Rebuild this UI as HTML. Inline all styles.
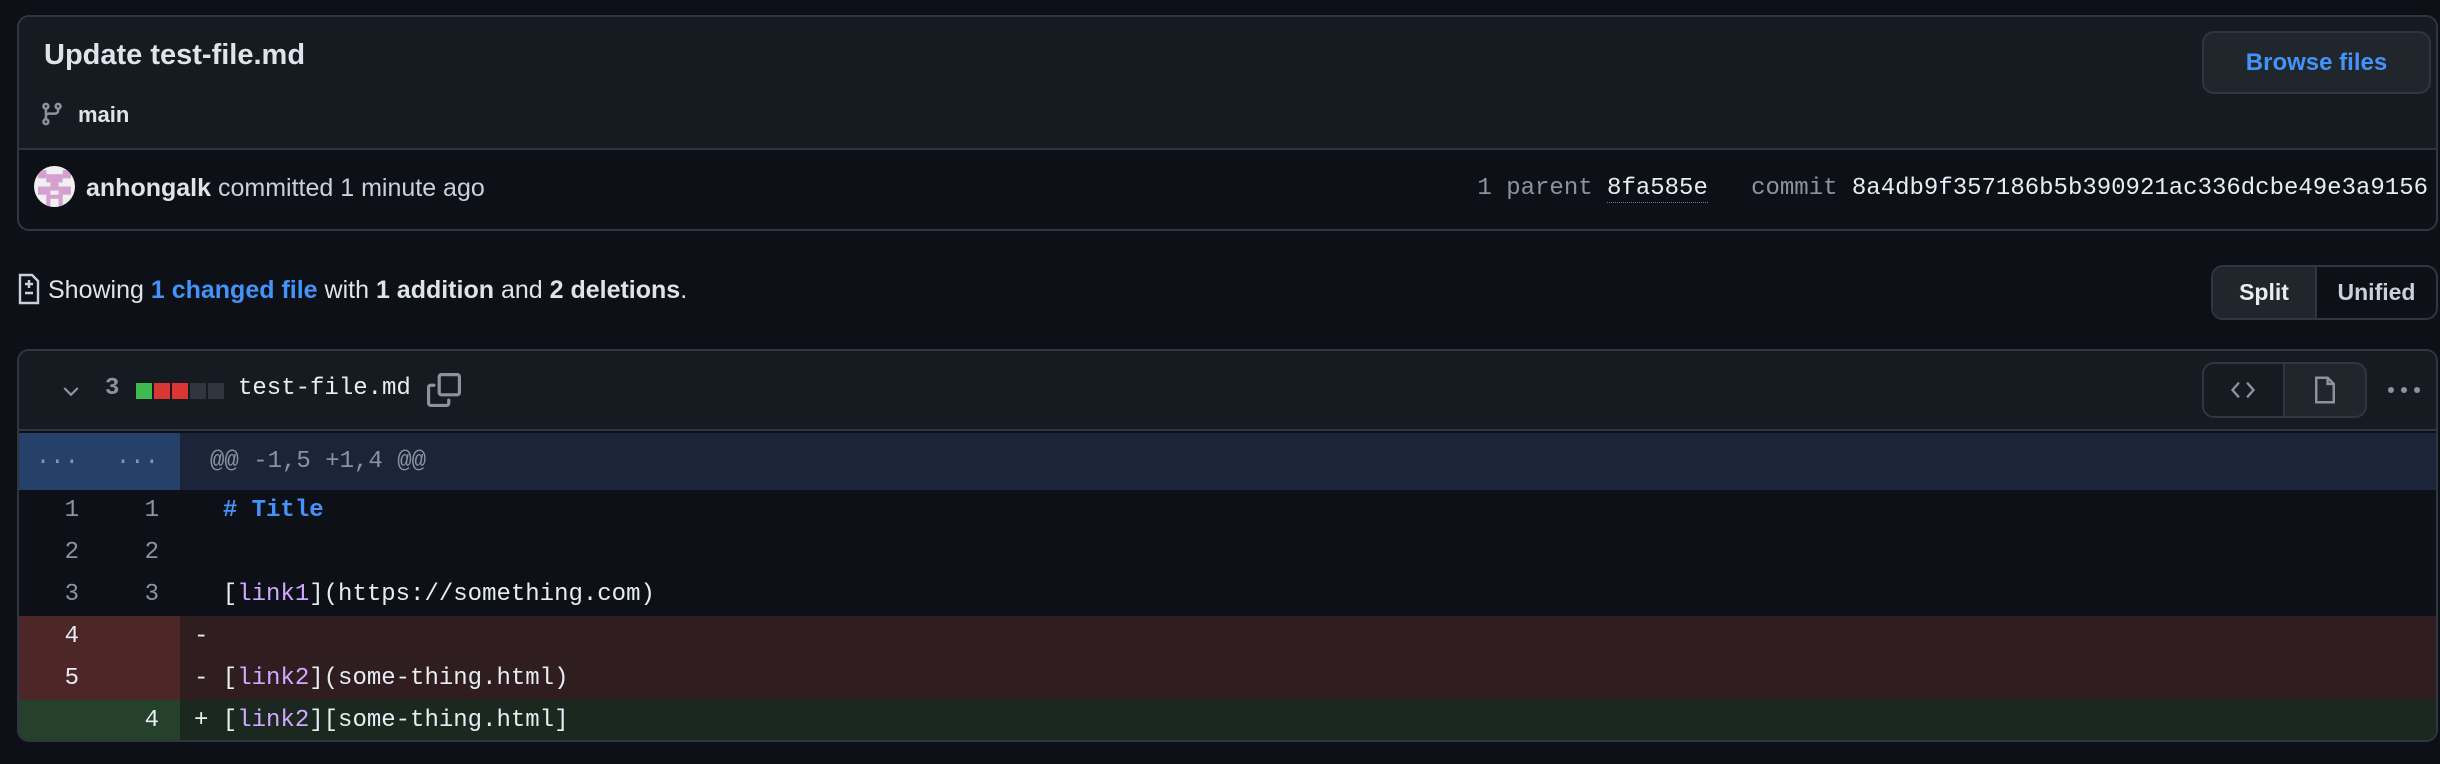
<!DOCTYPE html>
<html><head><meta charset="utf-8"><style>
*{box-sizing:border-box;margin:0;padding:0}
body{width:2440px;height:764px;background:#0d1117;font-family:"Liberation Sans",sans-serif;color:#e6edf3;position:relative;overflow:hidden}
.abs{position:absolute}
.mono{font-family:"Liberation Mono",monospace}
.box{position:absolute;left:17px;top:15px;width:2421px;height:216px;border:2px solid #30363d;border-radius:12px;background:#0d1117;overflow:hidden}
.box .hd{position:absolute;left:0;top:0;right:0;height:133px;background:#161b22;border-bottom:2px solid #30363d}
.btn{position:absolute;border:2px solid #30363d;border-radius:12px;background:#21262d}
.fbox{position:absolute;left:17px;top:349px;width:2421px;height:393px;border:2px solid #30363d;border-radius:12px;overflow:hidden;background:#0d1117}
.row{position:absolute;left:0;width:2421px;height:42px;font-family:"Liberation Mono",monospace;font-size:24px;line-height:42px}
.g1,.g2{position:absolute;top:0;width:80px;height:42px;text-align:right;padding-right:20px;color:#8b949e}
.g1{left:0}.g2{left:80px}
.code{position:absolute;left:161px;top:0;right:0;height:42px;white-space:pre;padding-left:14px}
.p{color:#d2a8ff}
</style></head><body>
<div class="box">
  <div class="hd">
    <div class="abs" style="left:25px;top:22px;font-size:29px;font-weight:bold;color:#dfe4ea">Update test-file.md</div>
    <svg class="abs" style="left:20px;top:83px" width="26" height="28" viewBox="0 0 16 16" fill="#8b949e"><path d="M9.5 3.25a2.25 2.25 0 1 1 3 2.122V6A2.5 2.5 0 0 1 10 8.5H6a1 1 0 0 0-1 1v1.128a2.251 2.251 0 1 1-1.5 0V5.372a2.25 2.25 0 1 1 1.5 0v1.836A2.493 2.493 0 0 1 6 7h4a1 1 0 0 0 1-1v-.628A2.25 2.25 0 0 1 9.5 3.250Zm-6 0a.75.75 0 1 0 1.5 0 .75.75 0 0 0-1.5 0Zm8.25-.75a.75.75 0 1 0 0 1.5.75.75 0 0 0 0-1.5ZM4.25 12a.75.75 0 1 0 0 1.5.75.75 0 0 0 0-1.5Z"/></svg>
    <div class="abs" style="left:59px;top:85px;font-size:22px;font-weight:bold;color:#dfe4ea">main</div>
    <div class="btn" style="left:2183px;top:14px;width:229px;height:63px;text-align:center;line-height:59px;font-size:24px;font-weight:bold;color:#4493f8">Browse files</div>
  </div>
  <svg class="abs" style="left:15px;top:149px" width="41" height="41" viewBox="0 0 10 10"><defs><clipPath id="c"><circle cx="5" cy="5" r="5"/></clipPath></defs><g clip-path="url(#c)"><rect width="10" height="10" fill="#f0f0f0"/><rect x="1" y="1" width="2" height="2" fill="#d59fd0"/><rect x="7" y="1" width="2" height="2" fill="#d59fd0"/><rect x="3" y="2" width="4" height="2" fill="#d59fd0"/><rect x="4" y="4" width="2" height="2" fill="#d59fd0"/><rect x="1" y="5" width="3" height="2" fill="#d59fd0"/><rect x="6" y="5" width="3" height="2" fill="#d59fd0"/><rect x="3" y="7" width="4" height="3" fill="#d59fd0"/><rect x="4" y="8" width="2" height="2" fill="#f0f0f0"/></g></svg>
  <div class="abs" style="left:67px;top:157px;font-size:25px;color:#dfe4ea"><b>anhongalk</b> <span style="color:#c9d1d9">committed 1 minute ago</span></div>
  <div class="abs mono" style="right:8px;top:158px;font-size:24px;color:#8b949e;white-space:pre">1 parent <span style="color:#e6edf3;border-bottom:1px dotted #6e7681">8fa585e</span>   commit <span style="color:#e6edf3">8a4db9f357186b5b390921ac336dcbe49e3a9156</span></div>
</div>

<svg class="abs" style="left:18px;top:273px" width="22" height="32" viewBox="0 0 11 16" fill="none" stroke="#c9d1d9" stroke-width="1.2"><path d="M1 1h6l3 3v11H1z"/><path d="M5.5 3.5v4M3.5 5.5h4M3.5 10h4"/></svg>
<div class="abs" style="left:48px;top:276px;font-size:25px;color:#dfe4ea">Showing <b style="color:#4493f8">1 changed file</b> with <b>1 addition</b> and <b>2 deletions</b>.</div>
<div class="btn" style="left:2211px;top:265px;width:227px;height:55px;overflow:hidden;background:#0d1117">
  <div class="abs" style="left:0;top:0;width:104px;height:51px;background:#21262d;border-right:2px solid #30363d;text-align:center;line-height:51px;font-size:23px;font-weight:bold">Split</div>
  <div class="abs" style="left:104px;top:0;width:119px;height:51px;text-align:center;line-height:51px;font-size:23px;font-weight:bold;color:#c9d1d9">Unified</div>
</div>

<div class="fbox">
  <div class="abs" style="left:0;top:0;width:2421px;height:80px;background:#161b22;border-bottom:2px solid #30363d"></div>
  <svg class="abs" style="left:40px;top:28px" width="24" height="24" viewBox="0 0 16 16" fill="none" stroke="#8b949e" stroke-width="1.5"><path d="M3.5 6l4.5 4.5L12.5 6"/></svg>
  <div class="abs mono" style="left:86px;top:24px;font-size:24px;font-weight:bold;color:#8b949e">3</div>
  <div class="abs" style="left:117px;top:32px;width:16px;height:16px;background:#3fb950"></div>
  <div class="abs" style="left:135px;top:32px;width:16px;height:16px;background:#da3633"></div>
  <div class="abs" style="left:153px;top:32px;width:16px;height:16px;background:#da3633"></div>
  <div class="abs" style="left:171px;top:32px;width:16px;height:16px;background:#30363d"></div>
  <div class="abs" style="left:189px;top:32px;width:16px;height:16px;background:#30363d"></div>
  <div class="abs mono" style="left:219px;top:24px;font-size:24px;color:#e6edf3">test-file.md</div>
  <svg class="abs" style="left:408px;top:22px" width="34" height="34" viewBox="0 0 16 16" fill="#8b949e"><path d="M0 6.75C0 5.784.784 5 1.75 5h1.5a.75.75 0 0 1 0 1.5h-1.5a.25.25 0 0 0-.25.25v7.5c0 .138.112.25.25.25h7.5a.25.25 0 0 0 .25-.25v-1.5a.75.75 0 0 1 1.5 0v1.5A1.75 1.75 0 0 1 9.25 16h-7.5A1.75 1.75 0 0 1 0 14.25Z"/><path d="M5 1.75C5 .784 5.784 0 6.75 0h7.5C15.216 0 16 .784 16 1.75v7.5A1.75 1.75 0 0 1 14.25 11h-7.5A1.75 1.75 0 0 1 5 9.25Zm1.75-.25a.25.25 0 0 0-.25.25v7.5c0 .138.112.25.25.25h7.5a.25.25 0 0 0 .25-.25v-7.5a.25.25 0 0 0-.25-.25Z"/></svg>
  <div class="btn" style="left:2183px;top:11px;width:165px;height:56px;overflow:hidden">
    <div class="abs" style="left:0;top:0;width:81px;height:52px;border-right:2px solid #30363d;background:#161b22"></div>
    <svg class="abs" style="left:26px;top:13px" width="26" height="26" viewBox="0 0 16 16" fill="none" stroke="#8b949e" stroke-width="1.4"><path d="M5.5 3.5L1.5 8l4 4.5M10.5 3.5l4 4.5-4 4.5"/></svg>
    <svg class="abs" style="left:108px;top:12px" width="26" height="28" viewBox="0 0 12 16" fill="none" stroke="#8b949e" stroke-width="1.4"><path d="M1 1h6.5L11 4.5V15H1z"/><path d="M7.5 1v3.5H11"/></svg>
  </div>
  <svg class="abs" style="left:2368px;top:34px" width="34" height="10" viewBox="0 0 34 10" fill="#8b949e"><circle cx="4" cy="5" r="3"/><circle cx="17" cy="5" r="3"/><circle cx="30" cy="5" r="3"/></svg>

  <div class="row" style="top:82px;height:57px;line-height:57px;background:#1b2438">
    <div class="abs" style="left:0;top:0;width:161px;height:57px;background:#25416a"></div>
    <div class="g1" style="height:57px;line-height:50px;color:#8b949e">...</div><div class="g2" style="height:57px;line-height:50px;color:#8b949e">...</div>
    <div class="code" style="height:57px;color:#8b949e;padding-left:30px">@@ -1,5 +1,4 @@</div>
  </div>
  <div class="row" style="top:139px"><div class="g1">1</div><div class="g2">1</div><div class="code">  <b style="color:#4493f8">#&nbsp;Title</b></div></div>
  <div class="row" style="top:181px"><div class="g1">2</div><div class="g2">2</div><div class="code"> </div></div>
  <div class="row" style="top:223px"><div class="g1">3</div><div class="g2">3</div><div class="code">  [<span class="p">link1</span>](https://something.com)</div></div>
  <div class="row" style="top:265px;background:#2f1d20"><div class="abs" style="left:0;top:0;width:161px;height:42px;background:#4d2728"></div><div class="g1" style="color:#e6edf3">4</div><div class="code">- </div></div>
  <div class="row" style="top:307px;background:#2f1d20"><div class="abs" style="left:0;top:0;width:161px;height:42px;background:#4d2728"></div><div class="g1" style="color:#e6edf3">5</div><div class="code">- [<span class="p">link2</span>](some-thing.html)</div></div>
  <div class="row" style="top:349px;background:#1a2820"><div class="abs" style="left:0;top:0;width:161px;height:42px;background:#25402b"></div><div class="g2" style="color:#e6edf3">4</div><div class="code">+ [<span class="p">link2</span>][some-thing.html]</div></div>
</div>
</body></html>
